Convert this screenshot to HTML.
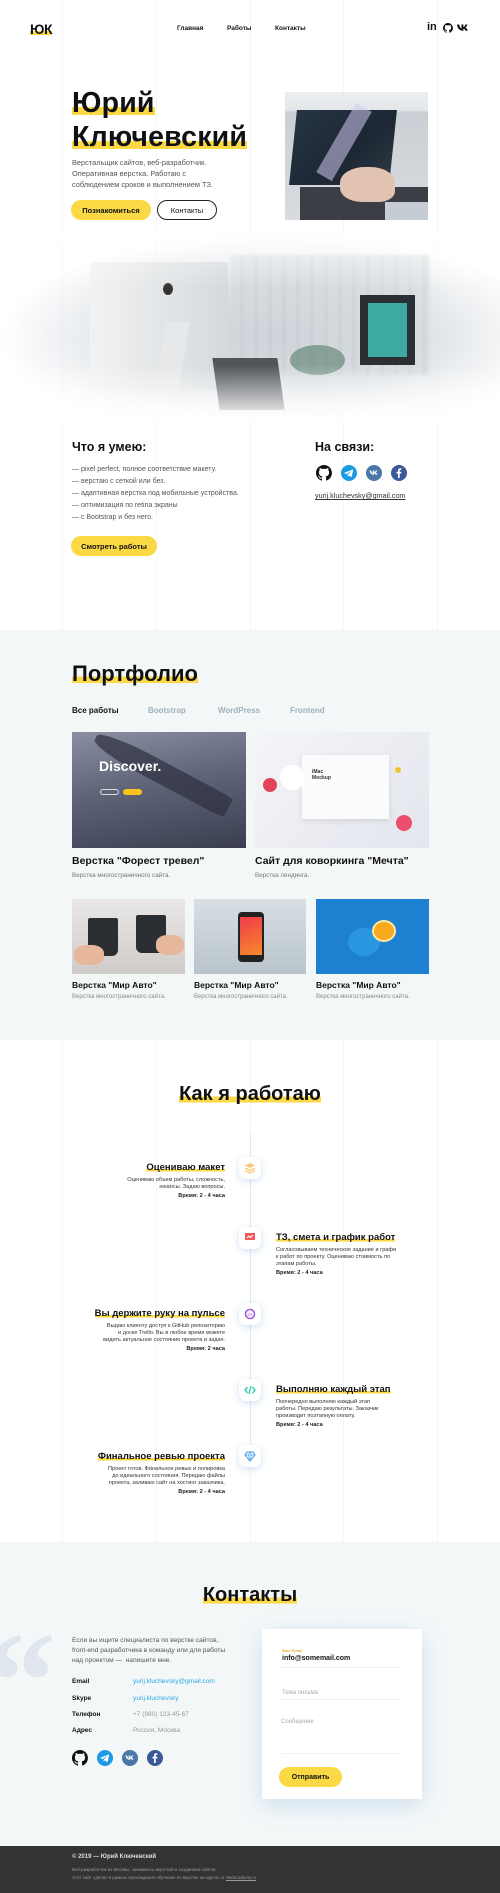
<!DOCTYPE html>
<html><head><meta charset="utf-8">
<style>
*{margin:0;padding:0;box-sizing:border-box}
body{width:500px;height:1893px;position:relative;background:#fff;font-family:"Liberation Sans","DejaVu Sans",sans-serif;color:#111;overflow:hidden}
.a{position:absolute}
.vl{position:absolute;top:0;width:1px;height:1846px;background:#f4f6f8}
.hl{background:linear-gradient(transparent 62%,#fbd944 62%,#fbd944 88%,transparent 88%);display:inline}
.b{font-weight:bold}
.g{color:#555}
.btn{position:absolute;border-radius:12px;font-size:7.5px;font-weight:bold;display:flex;align-items:center;justify-content:center}
.ic{position:absolute;width:22px;height:22px;border-radius:7px;background:#fff;box-shadow:0 2px 8px rgba(150,190,230,.45);display:flex;align-items:center;justify-content:center}
.st{position:absolute;font-size:9.5px;font-weight:bold}
.sd{position:absolute;font-size:5.6px;line-height:6.8px;color:#333}
.tm{position:absolute;font-size:5.6px;font-weight:bold;color:#222}
.ct{font-size:7.5px;position:absolute}
</style></head><body>
<div class="a" style="left:0;top:630px;width:500px;height:410px;background:#f4f7f8"></div>
<div class="a" style="left:0;top:1542px;width:500px;height:304px;background:#f4f7f8"></div>
<div class="vl" style="left:62px"></div><div class="vl" style="left:156px"></div><div class="vl" style="left:250px"></div><div class="vl" style="left:343px"></div><div class="vl" style="left:437px"></div>

<!-- nav -->
<div class="a b" style="left:30px;top:21px;font-size:14px;letter-spacing:-0.5px"><span class="hl">ЮК</span></div>
<div class="a b" style="left:177px;top:25px;font-size:6.5px">Главная</div>
<div class="a b" style="left:227px;top:25px;font-size:6.5px">Работы</div>
<div class="a b" style="left:275px;top:25px;font-size:6.5px">Контакты</div>
<div class="a b" style="left:427px;top:21px;font-size:11px">in</div>
<svg class="a" style="left:443px;top:23px" width="10" height="10" viewBox="0 0 16 16"><path fill="#111" d="M8 0a8 8 0 0 0-2.5 15.6c.4 0 .5-.2.5-.4v-1.5c-2.2.5-2.7-1-2.7-1-.4-.9-.9-1.2-.9-1.2-.7-.5.1-.5.1-.5.8.1 1.2.8 1.2.8.7 1.3 1.9.9 2.3.7.1-.5.3-.9.5-1.1-1.8-.2-3.6-.9-3.6-4 0-.9.3-1.6.8-2.1-.1-.2-.4-1 .1-2.1 0 0 .7-.2 2.2.8a7.5 7.5 0 0 1 4 0c1.5-1 2.2-.8 2.2-.8.4 1.1.2 1.9.1 2.1.5.6.8 1.3.8 2.1 0 3.1-1.9 3.8-3.6 4 .3.3.6.8.6 1.5v2.2c0 .2.1.5.6.4A8 8 0 0 0 8 0z"/></svg>
<svg class="a" style="left:457px;top:23px" width="11" height="10" viewBox="0 0 11 10"><path fill="#111" d="M0 1.5h2.2c.4 2.5 1.5 3.8 2.2 4V1.5h2v2.6c.8-.1 1.7-1.3 2-2.6h2c-.3 1.500-1.400 2.600-2 3 .6.3 1.800 1.200 2.300 3.200H8.500c-.4-1.200-1.300-2-2.100-2.100v2.100H6C2.400 7.700.3 5.200 0 1.500z"/></svg>

<!-- hero -->
<div class="a b" style="left:72px;top:86px;font-size:28.5px;line-height:34px;letter-spacing:0.2px"><span class="hl">Юрий</span><br><span class="hl">Ключевский</span></div>
<div class="a g" style="left:72px;top:157px;font-size:7.4px;line-height:11px">Верстальщик сайтов, веб-разработчик.<br>Оперативная верстка. Работаю с<br>соблюдением сроков и выполнением ТЗ.</div>
<div class="btn" style="left:71px;top:200px;width:80px;height:20px;background:#fbd944">Познакомиться</div>
<div class="btn" style="left:157px;top:200px;width:60px;height:20px;border:1px solid #222;font-weight:normal">Контакты</div>
<div class="a" style="left:285px;top:92px;width:143px;height:128px;background:linear-gradient(180deg,#eceef0 0%,#e4e7ea 14%,#c9cfd4 16%,#d8dcdf 100%);overflow:hidden">
  <div class="a" style="left:8px;top:18px;width:100px;height:75px;background:linear-gradient(135deg,#263444,#1c2733 60%,#2f3b45);transform:skewX(-6deg)"></div>
  <div class="a" style="left:50px;top:10px;width:18px;height:80px;background:rgba(210,200,240,.55);transform:rotate(30deg)"></div>
  <div class="a" style="left:15px;top:95px;width:128px;height:33px;background:#3b3f45"></div>
  <div class="a" style="left:55px;top:75px;width:55px;height:35px;border-radius:45% 45% 30% 40%;background:#e2c3b2"></div>
  <div class="a" style="left:100px;top:110px;width:43px;height:18px;background:#c5ccd3"></div>
</div>
<!-- desk photo -->
<div class="a" style="left:0;top:232px;width:500px;height:190px;background:radial-gradient(ellipse 55% 55% at 55% 55%,#c9d0d6 0%,#dfe3e7 55%,rgba(255,255,255,0) 100%)"></div>
<div class="a" style="left:230px;top:255px;width:200px;height:120px;background:repeating-linear-gradient(90deg,#d4d9dd 0 10px,#c7cdd2 10px 14px);opacity:.55;filter:blur(1px)"></div>
<div class="a" style="left:90px;top:262px;width:138px;height:128px;background:linear-gradient(90deg,#f1f2f3,#d5d9dc);border-radius:3px"></div>
<div class="a b" style="left:163px;top:283px;width:10px;height:12px;border-radius:50%;background:#333"></div>
<div class="a" style="left:160px;top:322px;width:24px;height:70px;background:#e6e8ea;transform:skewX(-10deg)"></div>
<div class="a" style="left:216px;top:358px;width:65px;height:52px;background:#3a3d42;transform:skewX(8deg);opacity:.85"></div>
<div class="a" style="left:360px;top:295px;width:55px;height:70px;background:#2a2f33"></div>
<div class="a" style="left:368px;top:303px;width:39px;height:54px;background:#3ea9a0"></div>
<div class="a" style="left:290px;top:345px;width:55px;height:30px;border-radius:50%;background:#4a7560;opacity:.55"></div>
<div class="a" style="left:0;top:232px;width:500px;height:190px;background:linear-gradient(180deg,rgba(255,255,255,.6),rgba(255,255,255,0) 30%,rgba(255,255,255,0) 70%,#fff)"></div>

<!-- skills -->
<div class="a b" style="left:72px;top:440px;font-size:12.5px">Что я умею:</div>
<div class="a g" style="left:72px;top:464px;font-size:7px;line-height:12px">— pixel perfect, полное соответствие макету.<br>— верстаю с сеткой или без.<br>— адаптивная верстка под мобильные устройства.<br>— оптимизация по retina экраны<br>— с Bootstrap и без него.</div>
<div class="btn" style="left:71px;top:536px;width:86px;height:20px;background:#fbd944">Смотреть работы</div>
<div class="a b" style="left:315px;top:440px;font-size:12.5px">На связи:</div>
<svg class="a" style="left:316px;top:465px" width="16" height="16" viewBox="0 0 16 16"><path fill="#111" d="M8 0a8 8 0 0 0-2.5 15.6c.4 0 .5-.2.5-.4v-1.5c-2.2.5-2.7-1-2.7-1-.4-.9-.9-1.2-.9-1.2-.7-.5.1-.5.1-.5.8.1 1.2.8 1.2.8.7 1.3 1.9.9 2.3.7.1-.5.3-.9.5-1.1-1.8-.2-3.6-.9-3.6-4 0-.9.3-1.6.8-2.1-.1-.2-.4-1 .1-2.1 0 0 .7-.2 2.2.8a7.5 7.5 0 0 1 4 0c1.5-1 2.2-.8 2.2-.8.4 1.1.2 1.9.1 2.1.5.6.8 1.3.8 2.1 0 3.1-1.9 3.8-3.6 4 .3.3.6.8.6 1.5v2.2c0 .2.1.5.6.4A8 8 0 0 0 8 0z"/></svg>
<svg class="a" style="left:341px;top:465px" width="16" height="16" viewBox="0 0 16 16"><circle cx="8" cy="8" r="8" fill="#1d9be2"/><path fill="#fff" d="M3.5 7.8l8-3.2c.4-.1.7.1.6.6l-1.4 6.4c-.1.4-.4.5-.8.3l-2-1.5-1 1c-.1.1-.2.2-.4.2l.1-2 3.8-3.4c.2-.2 0-.2-.2-.1L5.5 9 3.6 8.4c-.4-.1-.4-.4-.1-.6z"/></svg>
<svg class="a" style="left:366px;top:465px" width="16" height="16" viewBox="0 0 16 16"><circle cx="8" cy="8" r="8" fill="#4a76a8"/><path fill="#fff" d="M3.5 5.5h1.6c.3 1.6 1.1 2.7 1.6 2.9V5.5h1.5v1.7c.6-.1 1.3-.9 1.5-1.7h1.5c-.2 1-1 1.8-1.5 2.1.5.2 1.4.9 1.7 2.2h-1.6c-.3-.8-.9-1.4-1.6-1.5v1.5h-.2c-2.6 0-4.2-1.9-4.5-4.3z"/></svg>
<svg class="a" style="left:391px;top:465px" width="16" height="16" viewBox="0 0 16 16"><circle cx="8" cy="8" r="8" fill="#3b5998"/><path fill="#fff" d="M8.7 13V8.5h1.5l.2-1.7H8.7V5.7c0-.5.1-.8.8-.8h.9V3.4c-.2 0-.7-.1-1.3-.1-1.3 0-2.1.8-2.1 2.2v1.3H5.5v1.7H7V13z"/></svg>
<div class="a" style="left:315px;top:491px;font-size:7.2px;text-decoration:underline;color:#333">yurij.kluchevsky@gmail.com</div>

<!-- portfolio -->
<div class="a b" style="left:72px;top:661px;font-size:22px"><span class="hl">Портфолио</span></div>
<div class="a b" style="left:72px;top:706px;font-size:8px">Все работы</div>
<div class="a b" style="left:148px;top:706px;font-size:8px;color:#9fb1bc">Bootstrap</div>
<div class="a b" style="left:218px;top:706px;font-size:8px;color:#9fb1bc">WordPress</div>
<div class="a b" style="left:290px;top:706px;font-size:8px;color:#9fb1bc">Frontend</div>

<div class="a" style="left:72px;top:732px;width:174px;height:116px;background:linear-gradient(170deg,#8a8fa2 0%,#5f6479 45%,#3a3e50 100%);overflow:hidden">
 <div class="a" style="left:15px;top:30px;width:150px;height:22px;background:#2e3040;transform:rotate(28deg);border-radius:40% 10% 10% 40%;opacity:.7"></div>
</div>
<div class="a b" style="left:99px;top:758px;font-size:14px;color:#fff">Discover.</div>
<div class="a" style="left:123px;top:789px;width:19px;height:6px;border-radius:3px;background:#fbc31b"></div>
<div class="a" style="left:100px;top:789px;width:19px;height:6px;border-radius:3px;border:1px solid #ddd"></div>
<div class="a" style="left:255px;top:732px;width:174px;height:116px;background:linear-gradient(135deg,#f4f5f9,#e4e6ee)"></div>
<div class="a" style="left:302px;top:755px;width:87px;height:64px;background:#fafbfd;box-shadow:0 2px 6px rgba(0,0,0,.1)"></div>
<div class="a b" style="left:312px;top:769px;font-size:5px;line-height:6px;color:#333">iMac<br>Mockup</div>
<div class="a" style="left:263px;top:778px;width:14px;height:14px;border-radius:50%;background:#e4445a"></div>
<div class="a" style="left:396px;top:815px;width:16px;height:16px;border-radius:50%;background:#ec4e6e"></div>
<div class="a" style="left:280px;top:765px;width:25px;height:25px;border-radius:50%;background:#fff"></div>
<div class="a" style="left:395px;top:767px;width:6px;height:6px;border-radius:50%;background:#f5c22f"></div>

<div class="a b" style="left:72px;top:855px;font-size:10.5px">Верстка "Форест тревел"</div>
<div class="a g" style="left:72px;top:872px;font-size:6.3px;color:#777">Верстка многостраничного сайта.</div>
<div class="a b" style="left:255px;top:855px;font-size:10.5px">Сайт для коворкинга "Мечта"</div>
<div class="a g" style="left:255px;top:872px;font-size:6.3px;color:#777">Верстка лендинга.</div>

<div class="a" style="left:72px;top:899px;width:113px;height:75px;background:linear-gradient(180deg,#e9e7e8,#cfcbc8)"></div>
<div class="a" style="left:88px;top:918px;width:30px;height:38px;background:#2b2e33;border-radius:2px 2px 6px 6px"></div>
<div class="a" style="left:136px;top:915px;width:30px;height:38px;background:#2b2e33;border-radius:2px 2px 6px 6px"></div>
<div class="a" style="left:74px;top:945px;width:30px;height:20px;background:#e6b79a;border-radius:40%"></div>
<div class="a" style="left:156px;top:935px;width:28px;height:20px;background:#e6b79a;border-radius:40%"></div>
<div class="a" style="left:194px;top:899px;width:112px;height:75px;background:linear-gradient(180deg,#d8dfe4,#b8c4cb)"></div>
<div class="a" style="left:238px;top:912px;width:26px;height:50px;background:#222;border-radius:4px"></div>
<div class="a" style="left:240px;top:917px;width:22px;height:38px;background:linear-gradient(160deg,#f23b4b,#f48a2b)"></div>
<div class="a" style="left:316px;top:899px;width:113px;height:75px;background:#1e80d0"></div>
<div class="a" style="left:348px;top:928px;width:32px;height:28px;border-radius:50%;background:#2a95e0"></div>
<div class="a" style="left:372px;top:920px;width:24px;height:22px;border-radius:50%;background:#f8a81d;border:2px solid #ffe7a0"></div>

<div class="a b" style="left:72px;top:980px;font-size:8.5px">Верстка "Мир Авто"</div>
<div class="a" style="left:72px;top:994px;font-size:6px;color:#888">Верстка многостраничного сайта.</div>
<div class="a b" style="left:194px;top:980px;font-size:8.5px">Верстка "Мир Авто"</div>
<div class="a" style="left:194px;top:994px;font-size:6px;color:#888">Верстка многостраничного сайта.</div>
<div class="a b" style="left:316px;top:980px;font-size:8.5px">Верстка "Мир Авто"</div>
<div class="a" style="left:316px;top:994px;font-size:6px;color:#888">Верстка многостраничного сайта.</div>

<!-- process -->
<div class="a b" style="left:0;width:500px;text-align:center;top:1083px;font-size:20px"><span class="hl">Как я работаю</span></div>
<div class="a" style="left:250px;top:1132px;width:1px;height:310px;background:#dfe8ee"></div>
<div class="ic" style="left:239px;top:1157px"><svg width="12" height="12" viewBox="0 0 12 12"><path d="M6 1l5 2.5-5 2.5-5-2.5z" fill="#fbc97a"/><path d="M1 6l5 2.5L11 6M1 8.5l5 2.5 5-2.5" stroke="#fbc97a" fill="none" stroke-width="1.3"/></svg></div>
<div class="ic" style="left:239px;top:1227px"><svg width="12" height="12" viewBox="0 0 12 12"><rect x="1" y="1" width="10" height="7" fill="#f05a5a"/><path d="M3 6l2-2 1.5 1.5L9 3M6 8v3M4 11h4" stroke="#fff" stroke-width="1" fill="none"/></svg></div>
<div class="ic" style="left:239px;top:1303px"><svg width="12" height="12" viewBox="0 0 12 12"><circle cx="6" cy="6" r="4.5" fill="none" stroke="#a45ae0" stroke-width="1.6"/><text x="3.3" y="8" font-size="4.5" fill="#a45ae0" font-family="Liberation Sans">24</text></svg></div>
<div class="ic" style="left:239px;top:1379px"><svg width="12" height="12" viewBox="0 0 12 12"><path d="M3.5 3L1 6l2.5 3M8.5 3L11 6 8.5 9M7 2L5 10" stroke="#2fcfae" stroke-width="1.4" fill="none"/></svg></div>
<div class="ic" style="left:239px;top:1445px"><svg width="12" height="12" viewBox="0 0 12 12"><path d="M3 2h6l2 3-5 6-5-6z" fill="none" stroke="#5aa8ec" stroke-width="1.2"/><path d="M1 5h10M6 11L4.5 5 6 2l1.5 3z" stroke="#5aa8ec" stroke-width=".8" fill="none"/></svg></div>

<div class="st" style="right:275px;top:1162px"><span class="hl">Оцениваю макет</span></div>
<div class="sd" style="right:275px;top:1177px;text-align:right">Оцениваю объем работы, сложность,<br>нюансы. Задаю вопросы.</div>
<div class="tm" style="right:275px;top:1193px">Время: 2 - 4 часа</div>

<div class="st" style="left:276px;top:1232px"><span class="hl">ТЗ, смета и график работ</span></div>
<div class="sd" style="left:276px;top:1247px">Согласовываем техническое задание и графи<br>к работ по проекту. Оцениваю стоимость по<br>этапам работы.</div>
<div class="tm" style="left:276px;top:1270px">Время: 2 - 4 часа</div>

<div class="st" style="right:275px;top:1308px"><span class="hl">Вы держите руку на пульсе</span></div>
<div class="sd" style="right:275px;top:1323px;text-align:right">Выдаю клиенту доступ к GitHub репозиторию<br>и доске Trello. Вы в любое время можете<br>видеть актуальное состояние проекта и задач.</div>
<div class="tm" style="right:275px;top:1346px">Время: 2 часа</div>

<div class="st" style="left:276px;top:1384px"><span class="hl">Выполняю каждый этап</span></div>
<div class="sd" style="left:276px;top:1399px">Поочередно выполняю каждый этап<br>работы. Передаю результаты. Заказчик<br>производит поэтапную оплату.</div>
<div class="tm" style="left:276px;top:1422px">Время: 2 - 4 часа</div>

<div class="st" style="right:275px;top:1451px"><span class="hl">Финальное ревью проекта</span></div>
<div class="sd" style="right:275px;top:1466px;text-align:right">Проект готов. Финальное ревью и полировка<br>до идеального состояния. Передаю файлы<br>проекта, заливаю сайт на хостинг заказчика.</div>
<div class="tm" style="right:275px;top:1489px">Время: 2 - 4 часа</div>

<!-- contacts -->
<div class="a b" style="left:0;width:500px;text-align:center;top:1584px;font-size:20px"><span class="hl">Контакты</span></div>
<div class="a" style="left:-14px;top:1612px;font-size:140px;font-weight:bold;color:#dfe6ee;line-height:140px;font-family:'Liberation Serif',serif">“</div>
<div class="a g" style="left:72px;top:1636px;font-size:6.6px;line-height:10px">Если вы ищите специалиста по верстке сайтов,<br>front-end разработчика в команду или для работы<br>над проектом — &nbsp;напишите мне.</div>
<div class="ct b" style="left:72px;top:1678px;font-size:6.5px">Email</div><div class="ct" style="left:133px;top:1678px;font-size:6.5px;color:#2ea6e6">yurij.kluchevsky@gmail.com</div>
<div class="ct b" style="left:72px;top:1695px;font-size:6.5px">Skype</div><div class="ct" style="left:133px;top:1695px;font-size:6.5px;color:#2ea6e6">yurij.kluchevsky</div>
<div class="ct b" style="left:72px;top:1711px;font-size:6.5px">Телефон</div><div class="ct" style="left:133px;top:1711px;font-size:6.5px;color:#999">+7 (980) 123-45-67</div>
<div class="ct b" style="left:72px;top:1727px;font-size:6.5px">Адрес</div><div class="ct" style="left:133px;top:1727px;font-size:6.5px;color:#999">Россия, Москва</div>
<svg class="a" style="left:72px;top:1750px" width="16" height="16" viewBox="0 0 16 16"><path fill="#111" d="M8 0a8 8 0 0 0-2.5 15.6c.4 0 .5-.2.5-.4v-1.5c-2.2.5-2.7-1-2.7-1-.4-.9-.9-1.2-.9-1.2-.7-.5.1-.5.1-.5.8.1 1.2.8 1.2.8.7 1.3 1.9.9 2.3.7.1-.5.3-.9.5-1.1-1.8-.2-3.6-.9-3.6-4 0-.9.3-1.6.8-2.1-.1-.2-.4-1 .1-2.1 0 0 .7-.2 2.2.8a7.5 7.5 0 0 1 4 0c1.5-1 2.2-.8 2.2-.8.4 1.1.2 1.9.1 2.1.5.6.8 1.3.8 2.1 0 3.1-1.9 3.8-3.6 4 .3.3.6.8.6 1.5v2.2c0 .2.1.5.6.4A8 8 0 0 0 8 0z"/></svg>
<svg class="a" style="left:97px;top:1750px" width="16" height="16" viewBox="0 0 16 16"><circle cx="8" cy="8" r="8" fill="#1d9be2"/><path fill="#fff" d="M3.5 7.8l8-3.2c.4-.1.7.1.6.6l-1.4 6.4c-.1.4-.4.5-.8.3l-2-1.5-1 1c-.1.1-.2.2-.4.2l.1-2 3.8-3.4c.2-.2 0-.2-.2-.1L5.5 9 3.6 8.4c-.4-.1-.4-.4-.1-.6z"/></svg>
<svg class="a" style="left:122px;top:1750px" width="16" height="16" viewBox="0 0 16 16"><circle cx="8" cy="8" r="8" fill="#4a76a8"/><path fill="#fff" d="M3.5 5.5h1.6c.3 1.6 1.1 2.7 1.6 2.9V5.5h1.5v1.7c.6-.1 1.3-.9 1.5-1.7h1.5c-.2 1-1 1.8-1.5 2.1.5.2 1.4.9 1.7 2.2h-1.6c-.3-.8-.9-1.4-1.6-1.5v1.5h-.2c-2.6 0-4.2-1.9-4.5-4.3z"/></svg>
<svg class="a" style="left:147px;top:1750px" width="16" height="16" viewBox="0 0 16 16"><circle cx="8" cy="8" r="8" fill="#3b5998"/><path fill="#fff" d="M8.7 13V8.5h1.5l.2-1.7H8.7V5.7c0-.5.1-.8.8-.8h.9V3.4c-.2 0-.7-.1-1.3-.1-1.3 0-2.1.8-2.1 2.2v1.3H5.5v1.7H7V13z"/></svg>

<div class="a" style="left:262px;top:1629px;width:160px;height:170px;background:#fff;box-shadow:0 6px 20px rgba(160,195,225,.45)"></div>
<div class="a b" style="left:282px;top:1648px;font-size:4px;color:#f2a83a">Ваш Email</div>
<div class="a" style="left:282px;top:1655px;font-size:7px;color:#111;font-weight:bold">info@somemail.com</div>
<div class="a" style="left:281px;top:1667px;width:121px;height:1px;background:#eef1f3"></div>
<div class="a" style="left:282px;top:1690px;font-size:6px;color:#aaa">Тема письма</div>
<div class="a" style="left:281px;top:1699px;width:121px;height:1px;background:#eef1f3"></div>
<div class="a" style="left:281px;top:1719px;font-size:6px;color:#aaa">Сообщение</div>
<div class="a" style="left:281px;top:1753px;width:121px;height:1px;background:#eef1f3"></div>
<div class="btn" style="left:279px;top:1767px;width:63px;height:20px;background:#fbd944;font-size:7px">Отправить</div>

<!-- footer -->
<div class="a" style="left:0;top:1846px;width:500px;height:47px;background:#333"></div>
<div class="a b" style="left:72px;top:1854px;font-size:6px;color:#ddd">© 2019 — Юрий Ключевский</div>
<div class="a" style="left:72px;top:1866px;font-size:4.4px;line-height:8px;color:#999">Веб-разработчик из Москвы, занимаюсь версткой и созданием сайтов.<br>Этот сайт сделал в рамках прохождения обучения по верстке на курсах от <u>WebCademy.ru</u></div>
</body></html>
